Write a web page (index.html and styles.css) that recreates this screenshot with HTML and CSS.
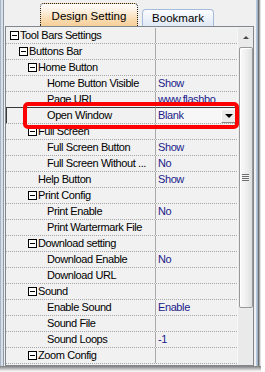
FILE: index.html
```html
<!DOCTYPE html>
<html>
<head>
<meta charset="utf-8">
<link rel="stylesheet" href="styles.css">
</head>
<body>
<div class="shell">
  <div class="frame-left"></div>
  <div class="panel">
    <div class="tabs">
      <div class="tab active">Design Setting</div>
      <div class="tab">Bookmark</div>
    </div>
    <div class="grid">
      <div class="rows">
        <div class="row"><div class="name cat l0"><span class="box"></span>Tool Bars Settings</div><div class="val"></div></div>
        <div class="row"><div class="name cat l1"><span class="box"></span>Buttons Bar</div><div class="val"></div></div>
        <div class="row"><div class="name cat l2"><span class="box"></span>Home Button</div><div class="val"></div></div>
        <div class="row"><div class="name leaf l3">Home Button Visible</div><div class="val">Show</div></div>
        <div class="row"><div class="name leaf l3">Page URL</div><div class="val">www.flashbo</div></div>
        <div class="row sel"><div class="name leaf l3">Open Window</div><div class="val">Blank<span class="drop"><span class="tri"></span></span></div></div>
        <div class="row"><div class="name cat l2"><span class="box"></span>Full Screen</div><div class="val"></div></div>
        <div class="row"><div class="name leaf l3">Full Screen Button</div><div class="val">Show</div></div>
        <div class="row"><div class="name leaf l3">Full Screen Without ...</div><div class="val">No</div></div>
        <div class="row"><div class="name leaf l2">Help Button</div><div class="val">Show</div></div>
        <div class="row"><div class="name cat l2"><span class="box"></span>Print Config</div><div class="val"></div></div>
        <div class="row"><div class="name leaf l3">Print Enable</div><div class="val">No</div></div>
        <div class="row"><div class="name leaf l3">Print Wartermark File</div><div class="val"></div></div>
        <div class="row"><div class="name cat l2"><span class="box"></span>Download setting</div><div class="val"></div></div>
        <div class="row"><div class="name leaf l3">Download Enable</div><div class="val">No</div></div>
        <div class="row"><div class="name leaf l3">Download URL</div><div class="val"></div></div>
        <div class="row"><div class="name cat l2"><span class="box"></span>Sound</div><div class="val"></div></div>
        <div class="row"><div class="name leaf l3">Enable Sound</div><div class="val">Enable</div></div>
        <div class="row"><div class="name leaf l3">Sound File</div><div class="val"></div></div>
        <div class="row"><div class="name leaf l3">Sound Loops</div><div class="val">-1</div></div>
        <div class="row"><div class="name cat l2"><span class="box"></span>Zoom Config</div><div class="val"></div></div>
      </div>
      <div class="scrollbar">
        <div class="sb-up"><span class="up-tri"></span></div>
        <div class="thumb"><span class="grip"></span></div>
      </div>
    </div>
  </div>
  <div class="frame-right"></div>
</div>
<div class="shadow-bottom"></div>
<div class="highlight"></div>
</body>
</html>
```
FILE: styles.css
```css
* { box-sizing: border-box; }
html, body { margin: 0; padding: 0; }
body {
  width: 265px;
  height: 372px;
  overflow: hidden;
  background: #ffffff;
  font-family: "Liberation Sans", Arial, sans-serif;
  font-size: 11px;
  letter-spacing: -0.4px;
  color: #000;
  position: relative;
}
.shell {
  display: flex;
  height: 366px;
  width: 261px;
}
.frame-left {
  width: 4px;
  flex: none;
  background: linear-gradient(90deg, #a9b6c4 0 1px, #d6dfe9 1px 3px, #8f9aa7 3px 4px);
}
.panel {
  width: 252px;
  flex: none;
  background: #f0f0f0;
  padding-left: 1px;
  display: flex;
  flex-direction: column;
}
.frame-right {
  width: 5px;
  flex: none;
  background: linear-gradient(90deg, #b7c8dc 0 1px, #9fb3cb 1px 2px, #6e6e6e 2px 3px, #a8a8a8 3px 4px, #e2e2e2 4px 5px);
}
.shadow-bottom {
  height: 6px;
  width: 261px;
  background: linear-gradient(180deg, #7d7d7d 0, #a9a9a9 2px, #dcdcdc 4px, #ffffff 6px);
}
.tabs {
  height: 26px;
  display: flex;
  align-items: flex-end;
  gap: 4px;
  padding-left: 35px;
  letter-spacing: 0;
}
.tab {
  font-size: 11.5px;
  text-align: center;
  border-radius: 4px 4px 0 0;
}
.tab.active {
  width: 98px;
  height: 23px;
  padding-top: 5px;
  line-height: 14px;
  border: 1px dotted #222;
  border-bottom: none;
  background: linear-gradient(180deg, #ffffff 0%, #fdf1e2 30%, #f8d9ac 75%, #f6cf98 100%);
}
.tab:not(.active) {
  width: 72px;
  height: 17px;
  line-height: 14px;
  padding-top: 1px;
  border: 1px solid #a4bcda;
  border-bottom: none;
  background: linear-gradient(180deg, #fbfdff 0%, #eef3fa 50%, #dfe8f4 100%);
}
.grid {
  width: 249px;
  height: 340px;
  border: 1px solid #82878f;
  background: #f1f1f1;
  display: flex;
  padding-top: 1px;
}
.rows {
  width: 231px;
  flex: none;
  display: flex;
  flex-direction: column;
}
.row {
  display: flex;
  height: 16px;
  border-bottom: 1px dotted #a6a6a6;
}
.name {
  width: 150px;
  flex: none;
  height: 15px;
  line-height: 15px;
  white-space: nowrap;
  overflow: hidden;
  display: flex;
  align-items: center;
  border-right: 1px solid #a9a9a9;
}
.val {
  flex: 1;
  height: 15px;
  line-height: 15px;
  padding-left: 2px;
  color: #1b1b8a;
  white-space: nowrap;
  overflow: hidden;
  display: flex;
  align-items: center;
}
.cat.l0 { padding-left: 4px; }
.cat.l1 { padding-left: 13px; }
.cat.l2 { padding-left: 22px; }
.leaf.l2 { padding-left: 32px; }
.leaf.l3 { padding-left: 41px; }
.box {
  width: 9px;
  height: 9px;
  border: 1px solid #000;
  margin-right: 1px;
  flex: none;
  position: relative;
  background: #fff;
}
.box::after {
  content: "";
  position: absolute;
  left: 1px;
  right: 1px;
  top: 3px;
  height: 1px;
  background: #000;
}
.row.sel { margin-top: -1px; height: 17px; }
.row.sel .name {
  height: 16px;
  border-top: 1px solid #3a3a3a;
  border-left: 1px solid #3a3a3a;
  padding-left: 40px;
}
.row.sel .val {
  height: 16px;
  border-top: 1px solid #3a3a3a;
  justify-content: space-between;
  padding-right: 1px;
  background: #f7f7f7;
}
.drop {
  width: 15px;
  height: 14px;
  border: 1px solid;
  border-color: #fdfdfd #8a8a8a #8a8a8a #fdfdfd;
  background: #ececec;
  display: flex;
  align-items: center;
  justify-content: center;
}
.tri {
  width: 0;
  height: 0;
  border-left: 4px solid transparent;
  border-right: 4px solid transparent;
  border-top: 4px solid #000;
}
.scrollbar {
  width: 16px;
  flex: none;
  background: #eaeaea;
  border-left: 1px solid #f7f7f7;
  display: flex;
  flex-direction: column;
  align-items: center;
}
.sb-up {
  height: 16px;
  width: 100%;
  display: flex;
  align-items: center;
  justify-content: center;
  padding-top: 2px;
}
.up-tri {
  width: 0;
  height: 0;
  border-left: 3px solid transparent;
  border-right: 3px solid transparent;
  border-bottom: 3px solid #4a4a4a;
}
.thumb {
  margin-top: 3px;
  width: 14px;
  height: 261px;
  border: 1px solid #989898;
  border-radius: 2px;
  background: linear-gradient(90deg, #fafafa 0%, #f0f0f0 50%, #dedede 100%);
  box-shadow: inset 1px 1px 0 #ffffff;
  display: flex;
  align-items: center;
  justify-content: center;
}
.grip {
  width: 7px;
  height: 7px;
  background: repeating-linear-gradient(180deg, #6f6f6f 0 1px, #f4f4f4 1px 2px);
}
.highlight {
  position: absolute;
  left: 23px;
  top: 102px;
  width: 216px;
  height: 27px;
  border: 4px solid #ff0000;
  border-radius: 5px;
}
```
